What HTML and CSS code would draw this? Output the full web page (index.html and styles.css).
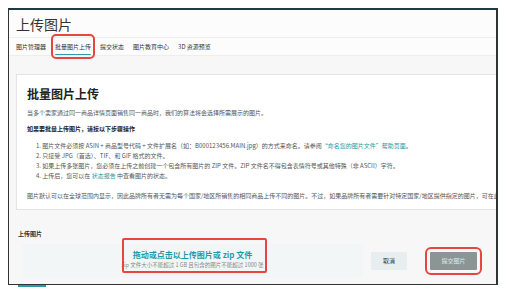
FILE: index.html
```html
<!DOCTYPE html>
<html lang="zh-CN">
<head>
    <meta charset="UTF-8">
    <title>上传图片</title>
    <link rel="stylesheet" href="styles.css">
</head>
<body>
    <div id="frame">
        <div class="title">上传图片</div>
        <ul class="tabs">
            <li>图片管理器</li>
            <li class="on">批量图片上传</li>
            <li>提交状态</li>
            <li>图片教育中心</li>
            <li>3D 资源预览</li>
        </ul>
        <div class="card">
            <h2>批量图片上传</h2>
            <p>当多个卖家通过同一商品详情页面销售同一商品时，我们的算法将会选择所需展示的图片。</p>
            <p class="strong">如果要批量上传图片，请按以下步骤操作</p>
            <ul class="steps">
                <li>1. 图片文件必须按 ASIN + 商品型号代码 + 文件扩展名（如：B000123456.MAIN.jpg）的方式来命名。请参阅<a>“命名您的图片文件”帮助页面</a>。</li>
                <li>2. 只接受 JPG（首选）、TIF、和 GIF 格式的文件。</li>
                <li>3. 如果上传多张图片，您必须在上传之前创建一个包含所有图片的 ZIP 文件。ZIP 文件名不得包含表情符号或其他特殊（非 ASCII）字符。</li>
                <li>4. 上传后，您可以在 <a>状态报告</a> 中查看图片的状态。</li>
            </ul>
            <p class="last">图片默认可以在全球范围内显示，因此品牌所有者无需为每个国家/地区所销售的相同商品上传不同的图片。不过，如果品牌所有者需要针对特定国家/地区提供指定的图片，可在此处</p>
        </div>
        <div class="upload">
            <div class="label">上传图片</div>
            <div class="row">
                <div class="drop">
                    <div class="drop-t">拖动或点击以上传图片或 zip 文件</div>
                    <div class="drop-s">zip 文件大小不能超过 1 GB 且包含的图片不能超过 1000 张</div>
                    <div class="mark"></div>
                </div>
                <div class="btn cancel">取消</div>
                <div class="btn submit">提交图片</div>
            </div>
        </div>
    </div>
    <div class="under"></div>
</body>
</html>
```

FILE: styles.css
```css
*{padding: 0;margin: 0;box-sizing: border-box;}
ul,li{list-style: none;}
body{
    background: #fff;
    font-family: "Noto Sans CJK SC", "Noto Sans", sans-serif;
    color: #333;
    padding: 8px 0 0 8px;
}
#frame{
    width: 490px;
    height: 277px;
    border: 1px solid #2f3333;
    border-top: 2px solid #1d3a40;
    border-right-width: 2px;
    background: #f7f7f7;
    overflow: hidden;
}
.title{
    height: 27px;
    padding: 5px 0 0 7px;
    font-size: 14px;
    line-height: 18px;
    color: #333;
    background: #fcfcfc;
}
.tabs{
    display: flex;
    gap: 9px;
    height: 19px;
    padding-left: 7px;
    border-top: 1px solid #eee;
    border-bottom: 1px solid #eee;
    background: #fcfcfc;
}
.tabs li{
    font-size: 6px;
    line-height: 17px;
    color: #333;
    position: relative;
}
.tabs li.on{
    border-bottom: 1px solid #2a9aa5;
    outline: 2px solid #e8453f;
    outline-offset: 2px;
    border-radius: 1px;
}
.card{
    width: 520px;
    margin: 18px 0 0 7px;
    padding: 12px 10px 8px;
    background: #fff;
    border: 1px solid #e4e4e4;
    font-size: 6px;
    line-height: 10px;
    color: #555;
}
.card h2{
    font-size: 12px;
    line-height: 14px;
    font-weight: bold;
    color: #222;
    margin-bottom: 7px;
}
.card p{margin-bottom: 6px;}
.card .strong{
    font-weight: bold;
    color: #222;
    margin-bottom: 7px;
}
.steps{
    padding-left: 9px;
    margin-bottom: 10px;
}
.card a{color: #2a9aa5;}
.card .last{
    white-space: nowrap;
    margin-bottom: 0;
}
.upload{
    padding: 19px 0 0 9px;
}
.label{
    font-size: 6px;
    line-height: 10px;
    font-weight: bold;
    color: #333;
    margin-bottom: 5px;
}
.row{
    display: flex;
    align-items: center;
}
.drop{
    position: relative;
    width: 341px;
    height: 34px;
    margin-left: 4px;
    background: #f3f6f7;
    text-align: center;
    padding-top: 5px;
}
.drop-t{
    font-size: 8px;
    line-height: 12px;
    font-weight: bold;
    color: #1e9bab;
}
.drop-s{
    font-size: 5.5px;
    line-height: 9px;
    color: #888;
}
.mark{
    position: absolute;
    left: 100px;
    top: -6px;
    width: 145px;
    height: 35px;
    border: 2px solid #e8453f;
    border-radius: 2px;
}
.btn{
    height: 18px;
    font-size: 6px;
    line-height: 18px;
    text-align: center;
}
.cancel{
    width: 36px;
    margin-left: 8px;
    background: #e8eef0;
    border-radius: 1px;
    color: #333;
}
.submit{
    width: 47px;
    margin-left: 23px;
    background: #8b9593;
    color: #e4e8e8;
    outline: 2px solid #e8453f;
    outline-offset: 3px;
    border-radius: 1px;
}
.under{
    width: 28px;
    height: 2px;
    margin-left: 10px;
    background: #2a9aa5;
}
```
